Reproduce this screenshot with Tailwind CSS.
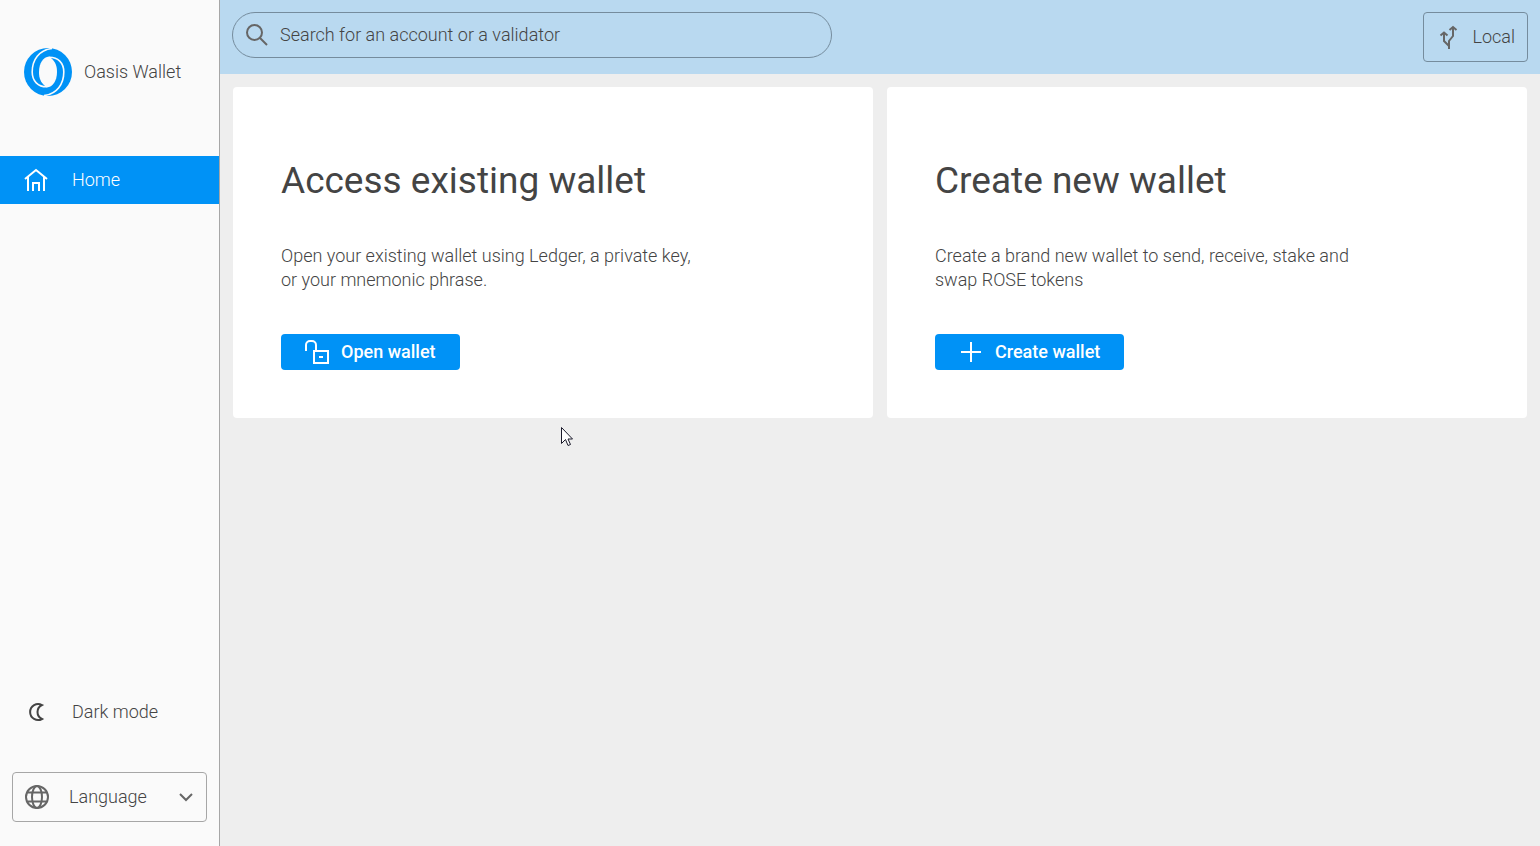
<!DOCTYPE html>
<html lang="en">
<head>
<meta charset="utf-8">
<meta name="viewport" content="width=device-width, initial-scale=1">
<title>Oasis Wallet</title>
<script src="https://cdn.jsdelivr.net/npm/@tailwindcss/browser@4"></script>
</head>
<body class="relative flex min-h-screen bg-[#eeeeee] font-[Roboto,sans-serif] text-[18px] leading-6 font-light text-[#444444]">
  <aside class="flex w-[220px] shrink-0 flex-col border-r border-[#a6a6a6] bg-[#fafafa]">
    <a href="#" class="mt-12 flex items-center gap-3 pl-6">
      <svg class="size-12" viewBox="0 0 48 48" aria-hidden="true">
        <circle cx="24" cy="24" r="24" fill="#0092f6"/>
        <path d="M21 38C16.500 34 15 30 15 24c0-9 4.500-15 10-15.500L27 10c4.500 4 6 8 6 14 0 9-4.500 15-10 15.500z" fill="#fafafa"/>
        <path d="M28 .5C15 2 8.200 12 8.200 24c0 9 5.800 15 14.800 14.800M20 47.500C33 46 39.800 36 39.800 24c0-9-5.800-15-14.800-14.800" fill="none" stroke="#fafafa" stroke-width="1.600"/>
      </svg>
      <span>Oasis Wallet</span>
    </a>
    <nav class="mt-15">
      <a href="#" class="flex h-12 items-center gap-6 bg-[#0092f6] pl-6 text-white">
        <svg class="size-6" viewBox="0 0 24 24" fill="none" stroke="currentColor" stroke-width="2" aria-hidden="true"><path d="M1 11l11-9 11 9M4 9v14M20 9v14M9 23v-8h6v8"/></svg>
        Home
      </a>
    </nav>
    <div class="mt-auto flex flex-col gap-9 pb-6">
      <button type="button" class="flex h-12 items-center gap-6 pl-6 text-left">
        <svg class="size-6" viewBox="0 0 24 24" fill="none" stroke="currentColor" stroke-width="2" aria-hidden="true"><path d="M18 5a8 8 0 1 0 0 14c-6-3-6-11 0-14z"/></svg>
        Dark mode
      </button>
      <button type="button" class="mx-3 flex h-[50px] items-center rounded border border-[#a6a6a6] px-3 text-left">
        <svg class="size-6 text-[#666666]" viewBox="0 0 24 24" fill="none" stroke="currentColor" stroke-width="2" aria-hidden="true"><circle cx="12" cy="12" r="11"/><ellipse cx="12" cy="12" rx="5" ry="11"/><path d="M2 7.500h20M2 16.500h20"/></svg>
        <span class="ml-5">Language</span>
        <svg class="ml-auto size-4 text-[#666666]" viewBox="0 0 16 16" fill="none" stroke="currentColor" stroke-width="2" aria-hidden="true"><path d="M2 5l6 6 6-6"/></svg>
      </button>
    </div>
  </aside>
  <div class="flex min-w-0 flex-1 flex-col">
    <header class="flex items-start justify-between gap-6 bg-[#b9d9f0] p-3">
      <label class="flex h-[46px] w-full max-w-[600px] items-center gap-[11px] rounded-full border border-[#758c9d] px-3">
        <svg class="size-6 shrink-0 text-[#666666]" viewBox="0 0 24 24" fill="none" stroke="currentColor" stroke-width="2" aria-hidden="true"><circle cx="9.500" cy="9.500" r="7.500"/><path d="M15 15l7 7"/></svg>
        <input type="search" aria-label="Search" placeholder="Search for an account or a validator" class="min-w-0 flex-1 bg-transparent outline-none placeholder:text-[#444444]">
      </label>
      <button type="button" class="flex h-[50px] items-center gap-3 rounded border border-[#758c9d] px-3">
        <svg class="size-6 text-[#666666]" viewBox="0 0 24 24" fill="none" stroke="currentColor" stroke-width="2" aria-hidden="true"><path d="M13 24v-8l4-5V3M13 21l-5-5V8M4.500 10.500L8 7.500l3.500 3M13.500 5L17 2l3.500 3"/></svg>
        Local
      </button>
    </header>
    <main class="grid grid-cols-2 gap-[14px] p-[13px]">
      <section class="flex flex-col items-start rounded bg-white px-12 pt-[72px] pb-12">
        <h1 class="text-[37px] leading-11 font-normal">Access existing wallet</h1>
        <p class="mt-[41px] max-w-[428px]">Open your existing wallet using Ledger, a private key, or your mnemonic phrase.</p>
        <a href="#" class="mt-[42px] flex h-9 items-center gap-3 rounded bg-[#0092f6] px-6 font-medium text-white">
          <svg class="size-6" viewBox="0 0 24 24" fill="none" stroke="currentColor" stroke-width="2" aria-hidden="true"><path d="M9 11h14v12H9zM11 11V5a4 4 0 0 0-4-4H5a4 4 0 0 0-4 4v6M14 17h4"/></svg>
          Open wallet
        </a>
      </section>
      <section class="flex flex-col items-start rounded bg-white px-12 pt-[72px] pb-12">
        <h1 class="text-[37px] leading-11 font-normal">Create new wallet</h1>
        <p class="mt-[41px] max-w-[428px]">Create a brand new wallet to send, receive, stake and swap ROSE tokens</p>
        <a href="#" class="mt-[42px] flex h-9 items-center gap-3 rounded bg-[#0092f6] px-6 font-medium text-white">
          <svg class="size-6" viewBox="0 0 24 24" fill="none" stroke="currentColor" stroke-width="2" aria-hidden="true"><path d="M12 2v20M2 12h20"/></svg>
          Create wallet
        </a>
      </section>
    </main>
  </div>
  <svg class="pointer-events-none absolute top-[427px] left-[561px] h-5 w-3" viewBox="0 0 12 20" fill="#ffffff" stroke="#1a1a2a" aria-hidden="true"><path d="M.5.5v16l4-4 2.500 6 2.500-1-2.500-5.500h4.500z"/></svg>
</body>
</html>
